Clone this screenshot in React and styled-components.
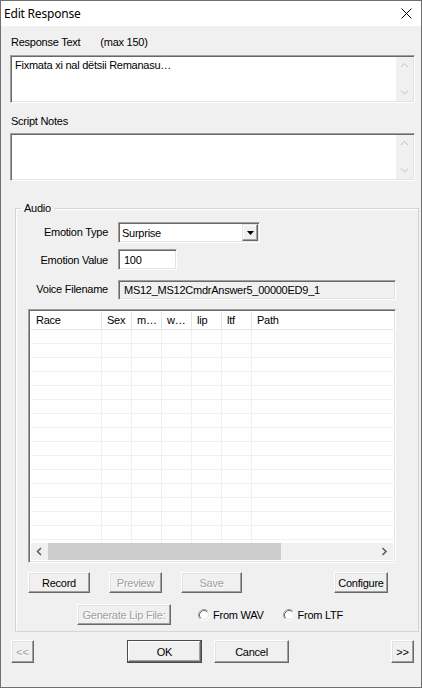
import React from 'react';
import styled, { createGlobalStyle, css } from 'styled-components';

const GlobalStyle = createGlobalStyle`
  html, body { margin: 0; padding: 0; background: #f0f0f0; }
  * { box-sizing: border-box; }
`;

const sunken = css`
  border-style: solid;
  border-width: 1px;
  border-color: #a0a0a0 #ffffff #ffffff #a0a0a0;
  box-shadow: inset 1px 1px 0 #696969, inset -1px -1px 0 #e3e3e3;
`;

const Window = styled.div`
  width: 422px;
  height: 688px;
  border: 1px solid #707070;
  background: #f0f0f0;
  display: flex;
  flex-direction: column;
  font-family: 'Liberation Sans', Arial, sans-serif;
  font-size: 11px;
  letter-spacing: -0.25px;
  color: #000;
`;

const TitleBar = styled.div`
  height: 25px;
  flex: none;
  background: #fff;
  display: flex;
  align-items: center;
  justify-content: space-between;
  padding: 0 9px 0 3px;
  font-family: 'Segoe UI', 'Noto Sans', sans-serif;
  font-size: 12px;
  letter-spacing: -0.2px;
`;

const Body = styled.div`
  display: flex;
  flex-direction: column;
  padding: 0 2px 0 9px;
`;

const LabelRow = styled.div`
  display: flex;
  height: 14px;
  line-height: 14px;
  margin-top: ${p => p.$mt}px;
  padding-left: 1px;
  span + span { margin-left: 20px; }
`;

const EditBox = styled.div`
  ${sunken};
  display: flex;
  height: 48px;
  margin-top: ${p => p.$mt}px;
  margin-right: 4px;
  background: #fff;
  padding: 1px;
`;

const EditText = styled.div`
  flex: 1;
  padding: 1px 3px;
  line-height: 14px;
`;

const VScroll = styled.div`
  width: 17px;
  background: #f0f0f0;
  display: flex;
  flex-direction: column;
  justify-content: space-between;
  align-items: center;
  padding: 5px 0 5px;
`;

const Group = styled.fieldset`
  margin: 20px 0 0 5px;
  padding: 7px 22px 6px 12px;
  border: 1px solid #d5d5d5;
  box-shadow: inset 1px 1px 0 #fff;
  min-width: 0;
`;

const Legend = styled.legend`
  padding: 0 3px;
  margin-left: -7px;
  line-height: 14px;
  font-size: 11px;
`;

const Field = styled.div`
  display: flex;
  align-items: center;
  margin-top: ${p => p.$mt || 0}px;
`;

const FieldLabel = styled.div`
  width: 80px;
  margin-right: 10px;
  text-align: right;
  white-space: nowrap;
  padding-bottom: ${p => p.$pb || 0}px;
`;

const Select = styled.div`
  ${sunken};
  width: 142px;
  height: 21px;
  background: #fff;
  display: flex;
  align-items: stretch;
  padding: 1px;
`;

const SelectValue = styled.div`
  flex: 1;
  padding-left: 2px;
  display: flex;
  align-items: center;
`;

const DropButton = styled.div`
  width: 16px;
  background: #f0f0f0;
  border: 1px solid;
  border-color: #e3e3e3 #696969 #696969 #e3e3e3;
  box-shadow: inset -1px -1px 0 #a0a0a0, inset 1px 1px 0 #fff;
  display: flex;
  align-items: center;
  justify-content: center;
`;

const TextInput = styled.div`
  ${sunken};
  width: ${p => (p.$w ? `${p.$w}px` : 'auto')};
  flex: ${p => (p.$w ? 'none' : 1)};
  height: ${p => p.$h}px;
  background: ${p => (p.$readOnly ? '#f0f0f0' : '#fff')};
  display: flex;
  align-items: center;
  padding-left: 5px;
`;

const ListView = styled.div`
  ${sunken};
  margin-top: 9px;
  height: 254px;
  background: #fff;
  padding: 2px;
  display: flex;
  flex-direction: column;
  overflow: hidden;
`;

const Header = styled.div`
  display: flex;
  height: 18px;
  flex: none;
  background: #fff;
  border-bottom: 1px solid #e5e5e5;
  color: #000;
`;

const HeadCell = styled.div`
  width: ${p => (p.$w ? `${p.$w}px` : 'auto')};
  flex: ${p => (p.$w ? 'none' : 1)};
  padding-left: 5px;
  line-height: 17px;
  border-right: ${p => (p.$w ? '1px solid #e5e5e5' : 'none')};
  white-space: nowrap;
  overflow: hidden;
  color: #000;
`;

const Rows = styled.div`
  flex: 1;
  overflow: hidden;
`;

const Row = styled.div`
  display: flex;
  height: 14px;
  border-bottom: 1px solid #f0f0f0;
`;

const Cell = styled.div`
  width: ${p => (p.$w ? `${p.$w}px` : 'auto')};
  flex: ${p => (p.$w ? 'none' : 1)};
  border-right: ${p => (p.$w ? '1px solid #f0f0f0' : 'none')};
`;

const HScroll = styled.div`
  height: 17px;
  flex: none;
  background: #f0f0f0;
  display: flex;
  align-items: stretch;
`;

const ArrowBox = styled.div`
  width: 17px;
  flex: none;
  display: flex;
  align-items: center;
  justify-content: center;
`;

const Track = styled.div`
  flex: 1;
  display: flex;
  align-items: stretch;
`;

const Thumb = styled.div`
  width: ${p => p.$w}px;
  background: #cdcdcd;
`;

const ButtonRow = styled.div`
  display: flex;
  align-items: center;
  margin-top: ${p => p.$mt}px;
`;

const Button = styled.div`
  width: ${p => p.$w}px;
  height: ${p => p.$h || 21}px;
  margin-left: ${p => (p.$ml === 'auto' ? 'auto' : `${p.$ml || 0}px`)};
  margin-right: ${p => p.$mr || 0}px;
  background: #f0f0f0;
  display: flex;
  align-items: center;
  justify-content: center;
  white-space: nowrap;
  color: ${p => (p.$disabled ? '#a0a0a0' : '#000')};
  text-shadow: ${p => (p.$disabled ? '1px 1px 0 #fff' : 'none')};
  border: 1px solid;
  border-color: ${p => (p.$default ? '#4a4a4a' : '#fff #696969 #696969 #fff')};
  box-shadow: ${p =>
    p.$default
      ? 'inset -1px -1px 0 #696969, inset 1px 1px 0 #fff, inset -2px -2px 0 #a0a0a0'
      : 'inset -1px -1px 0 #a0a0a0, inset 1px 1px 0 #e3e3e3'};
`;

const Radio = styled.label`
  display: flex;
  align-items: center;
  margin-left: ${p => p.$ml}px;
  svg { margin-right: 3px; }
`;

const BottomBar = styled.div`
  display: flex;
  align-items: center;
  margin-top: 8px;
  padding-right: 5px;
`;

const Chevron = ({ dir, color = '#c0c0c0', w = 1 }) => {
  const d = {
    up: 'M1 5 L4.5 1.5 L8 5',
    down: 'M1 1.5 L4.5 5 L8 1.5',
    left: 'M5 1 L1.5 4.5 L5 8',
    right: 'M1.5 1 L5 4.5 L1.5 8',
  }[dir];
  const vertical = dir === 'up' || dir === 'down';
  return (
    <svg width={vertical ? 9 : 7} height={vertical ? 7 : 9} viewBox={vertical ? '0 0 9 7' : '0 0 7 9'}>
      <path d={d} fill="none" stroke={color} strokeWidth={w} />
    </svg>
  );
};

const CloseIcon = () => (
  <svg width="11" height="11" viewBox="0 0 11 11">
    <path d="M0.5 0.5 L10.5 10.5 M10.5 0.5 L0.5 10.5" stroke="#000" strokeWidth="1" />
  </svg>
);

const RadioDot = () => (
  <svg width="12" height="12" viewBox="0 0 12 12">
    <circle cx="6" cy="6" r="5" fill="#fff" />
    <path d="M2.11 9.89 A5.5 5.5 0 0 1 9.89 2.11" fill="none" stroke="#a0a0a0" />
    <path d="M9.89 2.11 A5.5 5.5 0 0 1 2.11 9.89" fill="none" stroke="#fff" />
    <path d="M2.82 9.18 A4.5 4.5 0 0 1 9.18 2.82" fill="none" stroke="#696969" />
    <path d="M9.18 2.82 A4.5 4.5 0 0 1 2.82 9.18" fill="none" stroke="#e3e3e3" />
  </svg>
);

const columns = [
  { name: 'Race', w: 71 },
  { name: 'Sex', w: 30 },
  { name: 'm…', w: 30 },
  { name: 'w…', w: 30 },
  { name: 'lip', w: 30 },
  { name: 'ltf', w: 30 },
  { name: 'Path' },
];

const rows = Array.from({ length: 16 }, (_, i) => i);

export default function App() {
  return (
    <>
      <GlobalStyle />
      <Window>
        <TitleBar>
          <span>Edit Response</span>
          <CloseIcon />
        </TitleBar>
        <Body>
          <LabelRow $mt={9}>
            <span>Response Text</span>
            <span>(max 150)</span>
          </LabelRow>
          <EditBox $mt={6}>
            <EditText>Fixmata xi nal dëtsii Remanasu…</EditText>
            <VScroll>
              <Chevron dir="up" />
              <Chevron dir="down" />
            </VScroll>
          </EditBox>
          <LabelRow $mt={11}>
            <span>Script Notes</span>
          </LabelRow>
          <EditBox $mt={5}>
            <EditText />
            <VScroll>
              <Chevron dir="up" />
              <Chevron dir="down" />
            </VScroll>
          </EditBox>

          <Group>
            <Legend>Audio</Legend>
            <Field>
              <FieldLabel $pb={2}>Emotion Type</FieldLabel>
              <Select>
                <SelectValue>Surprise</SelectValue>
                <DropButton>
                  <svg width="7" height="4" viewBox="0 0 7 4">
                    <path d="M0 0 H7 L3.5 4 Z" fill="#000" />
                  </svg>
                </DropButton>
              </Select>
            </Field>
            <Field $mt={6}>
              <FieldLabel>Emotion Value</FieldLabel>
              <TextInput $w={59} $h={21}>100</TextInput>
            </Field>
            <Field $mt={10}>
              <FieldLabel $pb={3}>Voice Filename</FieldLabel>
              <TextInput $h={20} $readOnly>MS12_MS12CmdrAnswer5_00000ED9_1</TextInput>
            </Field>

            <ListView>
              <Header>
                {columns.map(c => (
                  <HeadCell key={c.name} $w={c.w}>{c.name}</HeadCell>
                ))}
              </Header>
              <Rows>
                {rows.map(r => (
                  <Row key={r}>
                    {columns.map(c => (
                      <Cell key={c.name} $w={c.w} />
                    ))}
                  </Row>
                ))}
              </Rows>
              <HScroll>
                <ArrowBox>
                  <Chevron dir="left" color="#606060" w={1.6} />
                </ArrowBox>
                <Track>
                  <Thumb $w={233} />
                </Track>
                <ArrowBox>
                  <Chevron dir="right" color="#606060" w={1.6} />
                </ArrowBox>
              </HScroll>
            </ListView>

            <ButtonRow $mt={9}>
              <Button $w={62}>Record</Button>
              <Button $w={53} $ml={19} $disabled>Preview</Button>
              <Button $w={61} $ml={19} $disabled>Save</Button>
              <Button $w={54} $ml="auto" $mr={8}>Configure</Button>
            </ButtonRow>

            <ButtonRow $mt={11}>
              <Button $w={94} $ml={49} $disabled>Generate Lip File:</Button>
              <Radio $ml={27}>
                <RadioDot />
                From WAV
              </Radio>
              <Radio $ml={19}>
                <RadioDot />
                From LTF
              </Radio>
            </ButtonRow>
          </Group>

          <BottomBar>
            <Button $w={23} $h={23} $ml={1} $disabled>&lt;&lt;</Button>
            <Button $w={75} $h={23} $ml={93} $default>OK</Button>
            <Button $w={75} $h={23} $ml={12}>Cancel</Button>
            <Button $w={23} $h={23} $ml="auto">&gt;&gt;</Button>
          </BottomBar>
        </Body>
      </Window>
    </>
  );
}
